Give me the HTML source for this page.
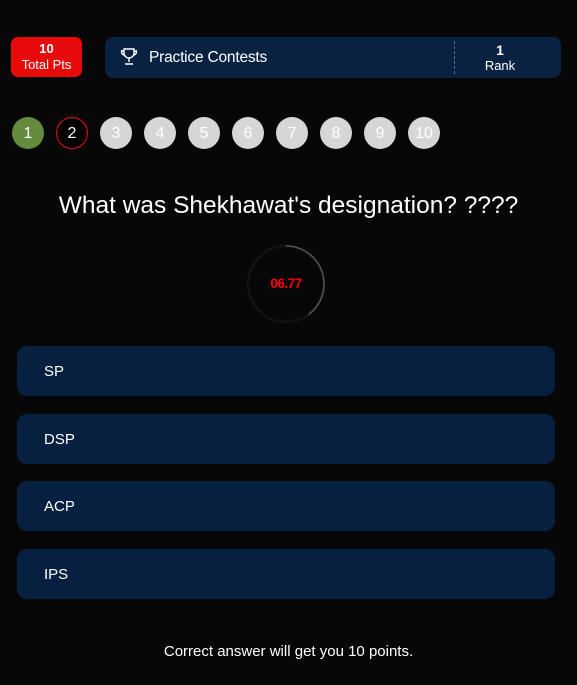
<!DOCTYPE html>
<html><head><style>
*{margin:0;padding:0;box-sizing:border-box}
body{width:577px;height:685px;background:#070707;font-family:"Liberation Sans",sans-serif;color:#fff;position:relative;overflow:hidden}
.abs{position:absolute}
.pts{left:11px;top:37px;width:71px;height:40px;background:#e70a0a;border-radius:7px;text-align:center;font-size:13px;line-height:16px;padding-top:4px}
.pts b{font-size:13px;display:block}
.bar{left:105px;top:37px;width:456px;height:41px;background:#0a2242;border-radius:8px}
.bar .t{position:absolute;left:44px;top:12px;font-size:15.5px;letter-spacing:-0.2px}
.bar .div{position:absolute;left:349px;top:4px;height:33px;border-left:1px dashed #5a6a80}
.bar .r{position:absolute;left:355px;width:80px;top:5px;text-align:center;font-size:13px;line-height:16px}
.bar .r b{font-size:14px;display:block}
.c{top:117px;width:32px;height:32px;border-radius:50%;background:#d6d6d6;text-align:center;line-height:34px;font-size:16px;color:#fff}
.q{left:0;width:577px;top:192px;text-align:center;font-size:24.5px}
.opt{left:17px;width:538px;height:50px;background:#082040;border-radius:10px;font-size:15px;padding-left:27px;line-height:52px}
.foot{left:0;width:577px;top:643px;text-align:center;font-size:15px}
</style></head><body>
<div class="abs pts"><b>10</b>Total Pts</div>
<div class="abs bar">
<svg class="abs" style="left:15px;top:10px" width="18" height="19" viewBox="0 0 18 19" fill="none" stroke="#fff" stroke-width="1.4"><path d="M4 2h10v4a5 5 0 0 1-10 0z"/><path d="M4 4H1.5c0 3 1.5 4 3 4M14 4h2.5c0 3-1.5 4-3 4"/><path d="M9 11v4M5 17h8"/></svg>
<div class="t">Practice Contests</div>
<div class="div"></div>
<div class="r"><b>1</b>Rank</div>
</div>
<div class="abs c" style="left:12px;background:#648a3c">1</div>
<div class="abs c" style="left:56px;background:#000;border:1px solid #e01010;line-height:32px">2</div>
<div class="abs c" style="left:100px">3</div>
<div class="abs c" style="left:144px">4</div>
<div class="abs c" style="left:188px">5</div>
<div class="abs c" style="left:232px">6</div>
<div class="abs c" style="left:276px">7</div>
<div class="abs c" style="left:320px">8</div>
<div class="abs c" style="left:364px">9</div>
<div class="abs c" style="left:408px">10</div>
<div class="abs q">What was Shekhawat's designation? ????</div>
<svg class="abs" style="left:246px;top:244px" width="80" height="80" viewBox="0 0 80 80">
<circle cx="40" cy="40" r="38" fill="none" stroke="#111" stroke-width="3"/>
<circle cx="40" cy="40" r="38" fill="none" stroke="#555" stroke-width="1.5" stroke-dasharray="95 300" transform="rotate(-90 40 40)"/>
<text x="40" y="44" text-anchor="middle" fill="#f00" font-family="Liberation Sans" font-weight="bold" font-size="13.5" letter-spacing="-0.5">06.77</text>
</svg>
<div class="abs opt" style="top:346px">SP</div>
<div class="abs opt" style="top:414px">DSP</div>
<div class="abs opt" style="top:481px">ACP</div>
<div class="abs opt" style="top:549px">IPS</div>
<div class="abs foot">Correct answer will get you 10 points.</div>
</body></html>
